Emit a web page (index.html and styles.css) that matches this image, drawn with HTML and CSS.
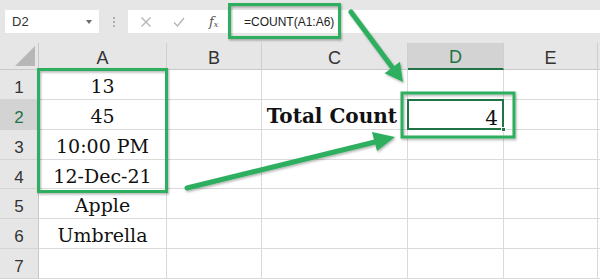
FILE: index.html
```html
<!DOCTYPE html>
<html>
<head>
<meta charset="utf-8">
<link rel="stylesheet" href="styles.css">
</head>
<body>
<div class="app">
  <div class="toolbar">
    <div class="namebox"><span>D2</span><span class="caret"></span></div>
    <div class="grip"><i></i><i></i><i></i></div>
    <div class="fbar">
      <div class="ficons">
        <svg class="ic" width="12" height="12" viewBox="0 0 12 12"><path d="M1.5 1.5L10.5 10.5M10.5 1.5L1.5 10.5" stroke="#b4b4b4" stroke-width="1.3" fill="none"/></svg>
        <svg class="ic" width="12" height="12" viewBox="0 0 12 12"><path d="M1 6.5L4.5 10L11 2" stroke="#b4b4b4" stroke-width="1.3" fill="none"/></svg>
        <span class="fx">f<sub>x</sub></span>
      </div>
      <div class="formula">=COUNT(A1:A6)</div>
    </div>
  </div>
  <div class="sheet">
    <div class="corner"><span class="tri"></span></div>
    <div class="ch">A</div><div class="ch">B</div><div class="ch">C</div><div class="ch sel">D</div><div class="ch">E</div><div class="ch last"></div>

    <div class="rh">1</div><div class="c v">13</div><div class="c"></div><div class="c"></div><div class="c"></div><div class="c"></div><div class="c last"></div>
    <div class="rh sel">2</div><div class="c v">45</div><div class="c"></div><div class="c v bold">Total Count</div><div class="c v num active">4<span class="handle"></span></div><div class="c"></div><div class="c last"></div>
    <div class="rh">3</div><div class="c v">10:00 PM</div><div class="c"></div><div class="c"></div><div class="c"></div><div class="c"></div><div class="c last"></div>
    <div class="rh">4</div><div class="c v">12-Dec-21</div><div class="c"></div><div class="c"></div><div class="c"></div><div class="c"></div><div class="c last"></div>
    <div class="rh">5</div><div class="c v">Apple</div><div class="c"></div><div class="c"></div><div class="c"></div><div class="c"></div><div class="c last"></div>
    <div class="rh">6</div><div class="c v">Umbrella</div><div class="c"></div><div class="c"></div><div class="c"></div><div class="c"></div><div class="c last"></div>
    <div class="rh">7</div><div class="c"></div><div class="c"></div><div class="c"></div><div class="c"></div><div class="c"></div><div class="c last"></div>
  </div>
  <svg class="overlay" width="600" height="279" viewBox="0 0 600 279">
    <defs>
      <filter id="sh" x="-20%" y="-20%" width="140%" height="140%">
        <feDropShadow dx="1" dy="1.5" stdDeviation="1.2" flood-color="#000" flood-opacity="0.3"/>
      </filter>
    </defs>
    <g filter="url(#sh)" fill="none" stroke="#2eae5f" stroke-width="3">
      <rect x="229.5" y="4.5" width="110" height="33"/>
      <rect x="38.5" y="69.5" width="128" height="122"/>
      <rect x="402" y="93" width="112" height="44"/>
    </g>
    <g filter="url(#sh)" fill="#2eae5f">
      <line x1="351" y1="12" x2="392" y2="67" stroke="#2eae5f" stroke-width="5" stroke-linecap="round"/>
      <polygon points="403,82 384.6,73.2 400,61.8"/>
      <line x1="187" y1="188" x2="375" y2="142" stroke="#2eae5f" stroke-width="5" stroke-linecap="round"/>
      <polygon points="395,137 377,151 372,132"/>
    </g>
  </svg>
</div>
</body>
</html>
```
FILE: styles.css
```css
* { box-sizing: border-box; }
html, body { margin: 0; padding: 0; background: #fff; }
.app { position: relative; width: 600px; height: 279px; overflow: hidden; font-family: "Liberation Sans", Arial, sans-serif; }

.toolbar { height: 43px; background: #e6e6e6; display: flex; align-items: flex-start; padding-top: 10px; padding-left: 5px; }
.namebox { width: 94px; height: 23px; background: #fff; display: flex; align-items: center; justify-content: space-between; padding: 0 7px 0 7px; font-size: 13px; color: #333; }
.caret { width: 0; height: 0; border-left: 3.5px solid transparent; border-right: 3.5px solid transparent; border-top: 4px solid #6a6a6a; }
.grip { width: 29px; height: 23px; display: flex; flex-direction: column; align-items: center; justify-content: center; gap: 2px; }
.grip i { display: block; width: 2px; height: 2px; background: #b0b0b0; }
.fbar { flex: 1; height: 23px; background: #fff; display: flex; align-items: center; }
.ficons { width: 101px; display: flex; align-items: center; padding-left: 12px; gap: 21px; }
.fx { font-family: "DejaVu Serif", serif; font-style: italic; font-size: 13px; color: #555; margin-left: 3px; }
.fx sub { font-size: 8px; vertical-align: -1px; }
.formula { padding-left: 15px; font-size: 12px; color: #222; }

.sheet { display: grid; grid-template-columns: 39px 128px 95px 146px 96px 94px 2px; grid-template-rows: 27px 30px 30px 30px 29px 30px 30px 30px; }
.corner { background: #e6e6e6; border-right: 1px solid #c8c8c8; border-bottom: 1px solid #c8c8c8; position: relative; }
.tri { position: absolute; right: 3px; bottom: 3px; width: 0; height: 0; border-left: 20px solid transparent; border-bottom: 20px solid #b7b7b7; }
.ch { background: #e6e6e6; border-right: 1px solid #cfcfcf; border-bottom: 1px solid #c8c8c8; display: flex; align-items: center; justify-content: center; padding-top: 4px; font-size: 18px; color: #333; }
.ch.sel { background: #d3d3d3; color: #217346; border-bottom: 2px solid #217346; }
.rh { background: #e6e6e6; border-right: 1px solid #c8c8c8; border-bottom: 1px solid #d4d4d4; display: flex; align-items: center; justify-content: center; padding-top: 7px; font-size: 17px; color: #333; }
.rh.sel { background: #d3d3d3; color: #217346; }
.c { border-right: 1px solid #dadada; border-bottom: 1px solid #dadada; background: #fff; }
.c.last, .ch.last { border-right: none; }
.c.v { display: flex; align-items: center; justify-content: center; padding-top: 3px; font-family: "DejaVu Serif", "Liberation Serif", serif; font-size: 19px; color: #111; }
.c.bold { font-weight: bold; font-size: 20px; justify-content: flex-end; padding-right: 10px; }
.c.num { justify-content: flex-end; padding-right: 5px; font-size: 20px; padding-top: 6px; }
.active { position: relative; }
.active::after { content: ""; position: absolute; left: -1px; top: -1px; right: -1px; bottom: -1px; border: 2px solid #217346; }
.handle { position: absolute; right: -3px; bottom: -3px; width: 5px; height: 5px; background: #217346; border: 1px solid #fff; z-index: 2; }
.overlay { position: absolute; left: 0; top: 0; pointer-events: none; }
```
